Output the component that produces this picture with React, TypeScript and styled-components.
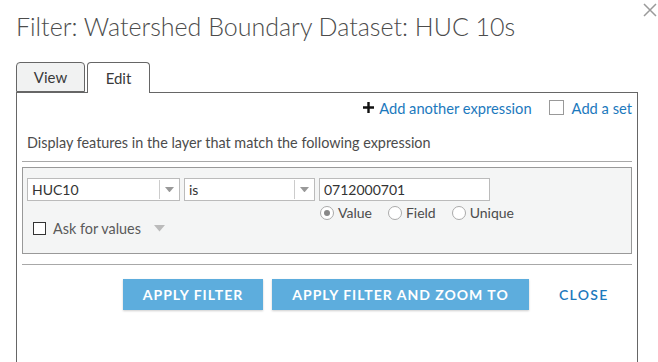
import React from "react";
import styled, { createGlobalStyle } from "styled-components";

const Global = createGlobalStyle`
  html, body { margin: 0; padding: 0; background: #fff; }
  body { font-family: Lato, "Open Sans", Arial, sans-serif; color: #4c4c4c; overflow: hidden; }
  * { box-sizing: border-box; }
`;

const Dialog = styled.div`
  width: 658px;
  height: 362px;
  padding-left: 16px;
  display: flex;
  flex-direction: column;
  position: relative;
`;

const Header = styled.div`
  height: 62px;
  display: flex;
  align-items: flex-start;
`;

const Title = styled.h1`
  margin: 11px 0 0;
  font-size: 25px;
  font-weight: 300;
  color: #4c4c4c;
  line-height: 30px;
`;

const CloseX = styled.button`
  position: absolute;
  top: 2px;
  right: 0;
  width: 16px;
  height: 16px;
  padding: 0;
  border: none;
  background: none;
  display: flex;
`;

const TabRow = styled.div`
  display: flex;
  gap: 2px;
  height: 31px;
  position: relative;
  z-index: 1;
`;

const Tab = styled.div<{ $active?: boolean }>`
  width: ${(p) => (p.$active ? 63 : 69)}px;
  height: ${(p) => (p.$active ? 31 : 30)}px;
  border: 1px solid #666;
  border-bottom: ${(p) => (p.$active ? "none" : "1px solid #666")};
  border-radius: 4px 4px 0 0;
  background: ${(p) => (p.$active ? "#fff" : "#f1f2f2")};
  display: flex;
  align-items: center;
  justify-content: center;
  font-size: 15px;
  color: #3a3a3a;
  padding-bottom: 1px;
`;

const Panel = styled.div`
  width: 622px;
  flex: 1;
  margin-top: -1px;
  border: 1px solid #666;
  border-bottom: none;
  padding: 0 5px;
  display: flex;
  flex-direction: column;
`;

const Toolbar = styled.div`
  height: 31px;
  display: flex;
  justify-content: flex-end;
  align-items: center;
  padding-bottom: 2px;
  font-size: 14.7px;
`;

const LinkText = styled.span`
  color: #1c79bd;
  display: flex;
  align-items: center;
  gap: 5px;
`;

const Box = styled.span<{ $dark?: boolean }>`
  width: ${(p) => (p.$dark ? 13 : 15)}px;
  height: ${(p) => (p.$dark ? 13 : 15)}px;
  border: 1px solid ${(p) => (p.$dark ? "#333" : "#999")};
  background: #fff;
  display: inline-block;
  flex-shrink: 0;
`;

const SetOption = styled.label`
  display: flex;
  align-items: center;
  gap: 8px;
  margin-left: 17px;
  color: #1c79bd;
`;

const Description = styled.div`
  font-size: 14.4px;
  color: #4c4c4c;
  height: 38px;
  display: flex;
  align-items: center;
  border-bottom: 1px solid #a8a8a8;
  padding-left: 5px;
`;

const ExprBox = styled.div`
  margin-top: 5px;
  height: 87px;
  border: 1px solid #999;
  background: #f4f5f5;
  padding: 10px 4px 0;
  display: flex;
  flex-direction: column;
`;

const ExprRow = styled.div`
  display: flex;
  gap: 4px;
`;

const Select = styled.div<{ $w: number }>`
  width: ${(p) => p.$w}px;
  height: 23px;
  border: 1px solid #bbb;
  background: #fff;
  display: flex;
  font-size: 14px;
  color: #333;
`;

const SelectText = styled.div`
  flex: 1;
  display: flex;
  align-items: center;
  padding-left: 4px;
`;

const SelectArrow = styled.div`
  width: 20px;
  border-left: 1px solid #ccc;
  margin: 1px 0;
  display: flex;
  align-items: center;
  justify-content: center;
`;

const ValueCol = styled.div`
  display: flex;
  flex-direction: column;
`;

const Input = styled.div`
  width: 171px;
  height: 23px;
  border: 1px solid #bbb;
  background: #fff;
  font-size: 14px;
  color: #333;
  display: flex;
  align-items: center;
  padding-left: 4px;
`;

const RadioRow = styled.div`
  display: flex;
  gap: 16px;
  margin-top: 3px;
  padding-left: 1px;
  font-size: 14px;
  color: #4c4c4c;
`;

const RadioOpt = styled.label`
  display: flex;
  align-items: center;
  gap: 4px;
`;

const Radio = styled.span<{ $on?: boolean }>`
  width: 14px;
  height: 14px;
  border-radius: 50%;
  border: 1px solid #aaa;
  background: #fff;
  display: flex;
  align-items: center;
  justify-content: center;
  &::after {
    content: "";
    width: 6px;
    height: 6px;
    border-radius: 50%;
    background: ${(p) => (p.$on ? "#888" : "transparent")};
  }
`;

const AskRow = styled.label`
  display: flex;
  align-items: center;
  gap: 7px;
  margin-top: -1px;
  padding-left: 6px;
  font-size: 14.4px;
  color: #5a5a5a;
`;

const Separator = styled.div`
  margin-top: 10px;
  border-top: 1px solid #a8a8a8;
`;

const Actions = styled.div`
  display: flex;
  align-items: center;
  margin-top: 14px;
  padding-left: 101px;
  gap: 9px;
`;

const Button = styled.button<{ $w: number }>`
  width: ${(p) => p.$w}px;
  height: 31px;
  border: none;
  background: #5daddd;
  color: #fff;
  font-family: Lato, "Open Sans", Arial, sans-serif;
  font-size: 14px;
  font-weight: 700;
  letter-spacing: 1px;
  box-shadow: 0 1px 2px rgba(0,0,0,0.2);
  padding: 0;
`;

const TextButton = styled.button`
  border: none;
  background: none;
  color: #1c79bd;
  font-family: Lato, "Open Sans", Arial, sans-serif;
  font-size: 14px;
  font-weight: 600;
  letter-spacing: 1.3px;
  margin-left: 21px;
  padding: 0;
`;

const Caret = ({ color = "#999", size = 9 }: { color?: string; size?: number }) => (
  <svg width={size} height={size * 0.6} viewBox="0 0 10 6">
    <path d="M0 0 L10 0 L5 6 Z" fill={color} />
  </svg>
);

const CaretSlot = styled.span`
  margin-left: 6px;
  display: flex;
`;

export default function App() {
  return (
    <>
      <Global />
      <Dialog>
        <Header>
          <Title>Filter: Watershed Boundary Dataset: HUC 10s</Title>
        </Header>
        <CloseX aria-label="close">
          <svg width="16" height="16" viewBox="0 0 16 16">
            <path d="M2 2 L14 14 M14 2 L2 14" stroke="#9a9a9a" strokeWidth="1.5" />
          </svg>
        </CloseX>
        <TabRow>
          <Tab>View</Tab>
          <Tab $active>Edit</Tab>
        </TabRow>
        <Panel>
          <Toolbar>
            <LinkText>
              <svg width="11" height="11" viewBox="0 0 11 11">
                <path d="M5.5 0 V11 M0 5.5 H11" stroke="#111" strokeWidth="2.4" />
              </svg>
              Add another expression
            </LinkText>
            <SetOption>
              <Box />
              Add a set
            </SetOption>
          </Toolbar>
          <Description>Display features in the layer that match the following expression</Description>
          <ExprBox>
            <ExprRow>
              <Select $w={153}>
                <SelectText>HUC10</SelectText>
                <SelectArrow>
                  <Caret />
                </SelectArrow>
              </Select>
              <Select $w={131}>
                <SelectText>is</SelectText>
                <SelectArrow>
                  <Caret />
                </SelectArrow>
              </Select>
              <ValueCol>
                <Input>0712000701</Input>
                <RadioRow>
                  <RadioOpt>
                    <Radio $on />
                    Value
                  </RadioOpt>
                  <RadioOpt>
                    <Radio />
                    Field
                  </RadioOpt>
                  <RadioOpt>
                    <Radio />
                    Unique
                  </RadioOpt>
                </RadioRow>
              </ValueCol>
            </ExprRow>
            <AskRow>
              <Box $dark />
              Ask for values
              <CaretSlot>
                <Caret color="#bbb" size={11} />
              </CaretSlot>
            </AskRow>
          </ExprBox>
          <Separator />
          <Actions>
            <Button $w={140}>APPLY FILTER</Button>
            <Button $w={257}>APPLY FILTER AND ZOOM TO</Button>
            <TextButton>CLOSE</TextButton>
          </Actions>
        </Panel>
      </Dialog>
    </>
  );
}
